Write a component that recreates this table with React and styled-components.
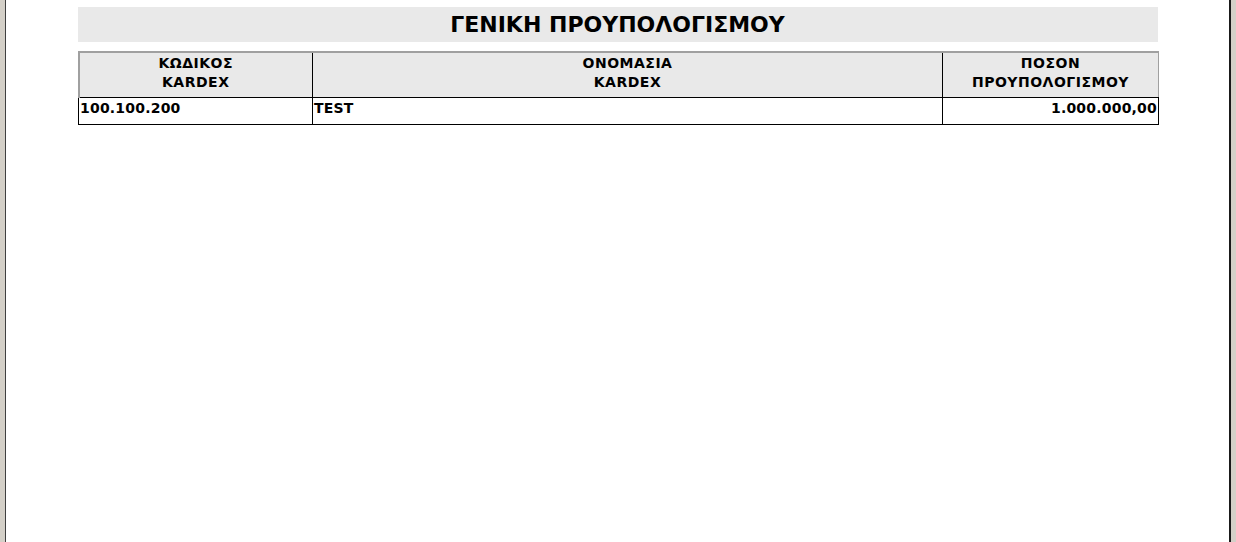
import React from "react";
import styled, { createGlobalStyle } from "styled-components";

const Global = createGlobalStyle`
  html, body { margin: 0; padding: 0; background: #ffffff; }
  body { font-family: "DejaVu Sans", Verdana, sans-serif; color: #000; }
`;

const Frame = styled.div`
  display: flex;
  height: 542px;
  overflow: hidden;
`;

const Side = styled.div`
  flex: none;
  width: ${(p) => p.$w}px;
  background: #d4d0c8;
  ${(p) => (p.$left ? "border-right: 1px solid #404040;" : "border-left: 2px solid #1a1a1a;")}
`;

const Content = styled.div`
  flex: 1;
  background: #fff;
  display: flex;
  justify-content: center;
`;

const Report = styled.div`
  width: 1080px;
  padding-top: 7px;
  display: flex;
  flex-direction: column;
  gap: 9px;
`;

const Title = styled.div`
  height: 35px;
  background: #e9e9e9;
  display: flex;
  align-items: center;
  justify-content: center;
  font-weight: bold;
  font-size: 22px;
`;

const Table = styled.table`
  width: 1080px;
  border-collapse: collapse;
  table-layout: fixed;
  font-weight: bold;
`;

const HeadCell = styled.th`
  background: #e9e9e9;
  height: 40px;
  padding: 0 0 4px;
  text-align: center;
  vertical-align: middle;
  font-size: 14px;
  letter-spacing: 0.5px;
  line-height: 19px;
  border: 1px solid #000;
  border-top: 2px solid #a0a0a0;
  &:first-child { border-left: 2px solid #a0a0a0; }
  &:last-child { border-right: 1px solid #a0a0a0; }
`;

const Cell = styled.td`
  height: 25px;
  padding: 1px 1px 0;
  vertical-align: top;
  text-align: ${(p) => p.$align || "left"};
  border: 1px solid #000;
  font-size: 14px;
  letter-spacing: 0.2px;
  line-height: 19px;
`;

const columns = [
  { w: 234, label: ["ΚΩΔΙΚΟΣ", "KARDEX"] },
  { w: 630, label: ["ΟΝΟΜΑΣΙΑ", "KARDEX"] },
  { w: 216, label: ["ΠΟΣΟΝ", "ΠΡΟΥΠΟΛΟΓΙΣΜΟΥ"] },
];

const rows = [{ code: "100.100.200", name: "TEST", amount: "1.000.000,00" }];

export default function App() {
  return (
    <>
      <Global />
      <Frame>
        <Side $left $w={5} />
        <Content>
          <Report>
            <Title>ΓΕΝΙΚΗ ΠΡΟΥΠΟΛΟΓΙΣΜΟΥ</Title>
            <Table>
              <colgroup>
                {columns.map((c, i) => (
                  <col key={i} style={{ width: c.w }} />
                ))}
              </colgroup>
              <thead>
                <tr>
                  {columns.map((c, i) => (
                    <HeadCell key={i}>
                      {c.label[0]}
                      <br />
                      {c.label[1]}
                    </HeadCell>
                  ))}
                </tr>
              </thead>
              <tbody>
                {rows.map((r, i) => (
                  <tr key={i}>
                    <Cell>{r.code}</Cell>
                    <Cell>{r.name}</Cell>
                    <Cell $align="right">{r.amount}</Cell>
                  </tr>
                ))}
              </tbody>
            </Table>
          </Report>
        </Content>
        <Side $w={5} />
      </Frame>
    </>
  );
}
